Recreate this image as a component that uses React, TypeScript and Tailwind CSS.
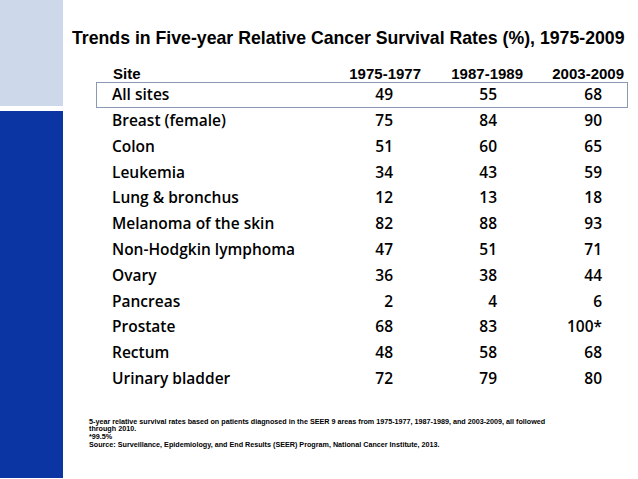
const rows: [string, string, string, string][] = [
  ["All sites", "49", "55", "68"],
  ["Breast (female)", "75", "84", "90"],
  ["Colon", "51", "60", "65"],
  ["Leukemia", "34", "43", "59"],
  ["Lung & bronchus", "12", "13", "18"],
  ["Melanoma of the skin", "82", "88", "93"],
  ["Non-Hodgkin lymphoma", "47", "51", "71"],
  ["Ovary", "36", "38", "44"],
  ["Pancreas", "2", "4", "6"],
  ["Prostate", "68", "83", "100*"],
  ["Rectum", "48", "58", "68"],
  ["Urinary bladder", "72", "79", "80"],
];

export default function App() {
  return (
    <div className="flex h-[479px] w-[638px] bg-white overflow-hidden">
      {/* side bar */}
      <div className="flex w-[63px] shrink-0 flex-col gap-[5px] pb-[1px]">
        <div className="h-[106px] bg-[#cdd8ea]" />
        <div className="flex-1 bg-[#0a35a3]" />
      </div>

      <div className="flex flex-1 flex-col">
        <h1 className="mt-[27px] ml-[9px] whitespace-nowrap font-['Liberation_Sans',Arial,sans-serif] text-[17.7px] font-bold leading-[22px] text-black">
          Trends in Five-year Relative Cancer Survival Rates (%), 1975-2009
        </h1>

        <div className="mt-[13px] ml-[33px] w-[532px]">
          {/* header row shares the grid of the data rows */}
          <div className="grid h-[20px] grid-cols-[191px_90px_104px_105px] items-center border border-transparent pl-[16px] pr-[26px] font-['Liberation_Sans',Arial,sans-serif] text-[15px] font-bold text-black">
            <div>Site</div>
            <div className="-mr-[27px] text-right whitespace-nowrap">1975-1977</div>
            <div className="-mr-[25px] text-right whitespace-nowrap">1987-1989</div>
            <div className="-mr-[21px] text-right whitespace-nowrap">2003-2009</div>
          </div>

          <div className="font-['Open_Sans',sans-serif] text-[15.5px] font-semibold text-black">
            {rows.map((r, i) => (
              <div
                key={r[0]}
                className={
                  "grid h-[25.8px] grid-cols-[191px_90px_104px_105px] items-center pl-[15px] pr-[26px] " +
                  (i === 0 ? "border border-[#8b9ab0]" : "border border-transparent")
                }
              >
                <div className="whitespace-nowrap">{r[0]}</div>
                <div className="text-right">{r[1]}</div>
                <div className="text-right">{r[2]}</div>
                <div className="text-right">{r[3]}</div>
              </div>
            ))}
          </div>
        </div>

        <div className="mt-[26px] ml-[26px] w-[470px] font-['Liberation_Sans',Arial,sans-serif] text-[7.2px] font-bold leading-[7.5px] text-black">
          <p>
            5-year relative survival rates based on patients diagnosed in the SEER 9 areas from 1975-1977, 1987-1989, and 2003-2009, all followed through 2010.
          </p>
          <p>*99.5%</p>
          <p className="mt-[1px]">
            Source: Surveillance, Epidemiology, and End Results (SEER) Program, National Cancer Institute, 2013.
          </p>
        </div>
      </div>
    </div>
  );
}
